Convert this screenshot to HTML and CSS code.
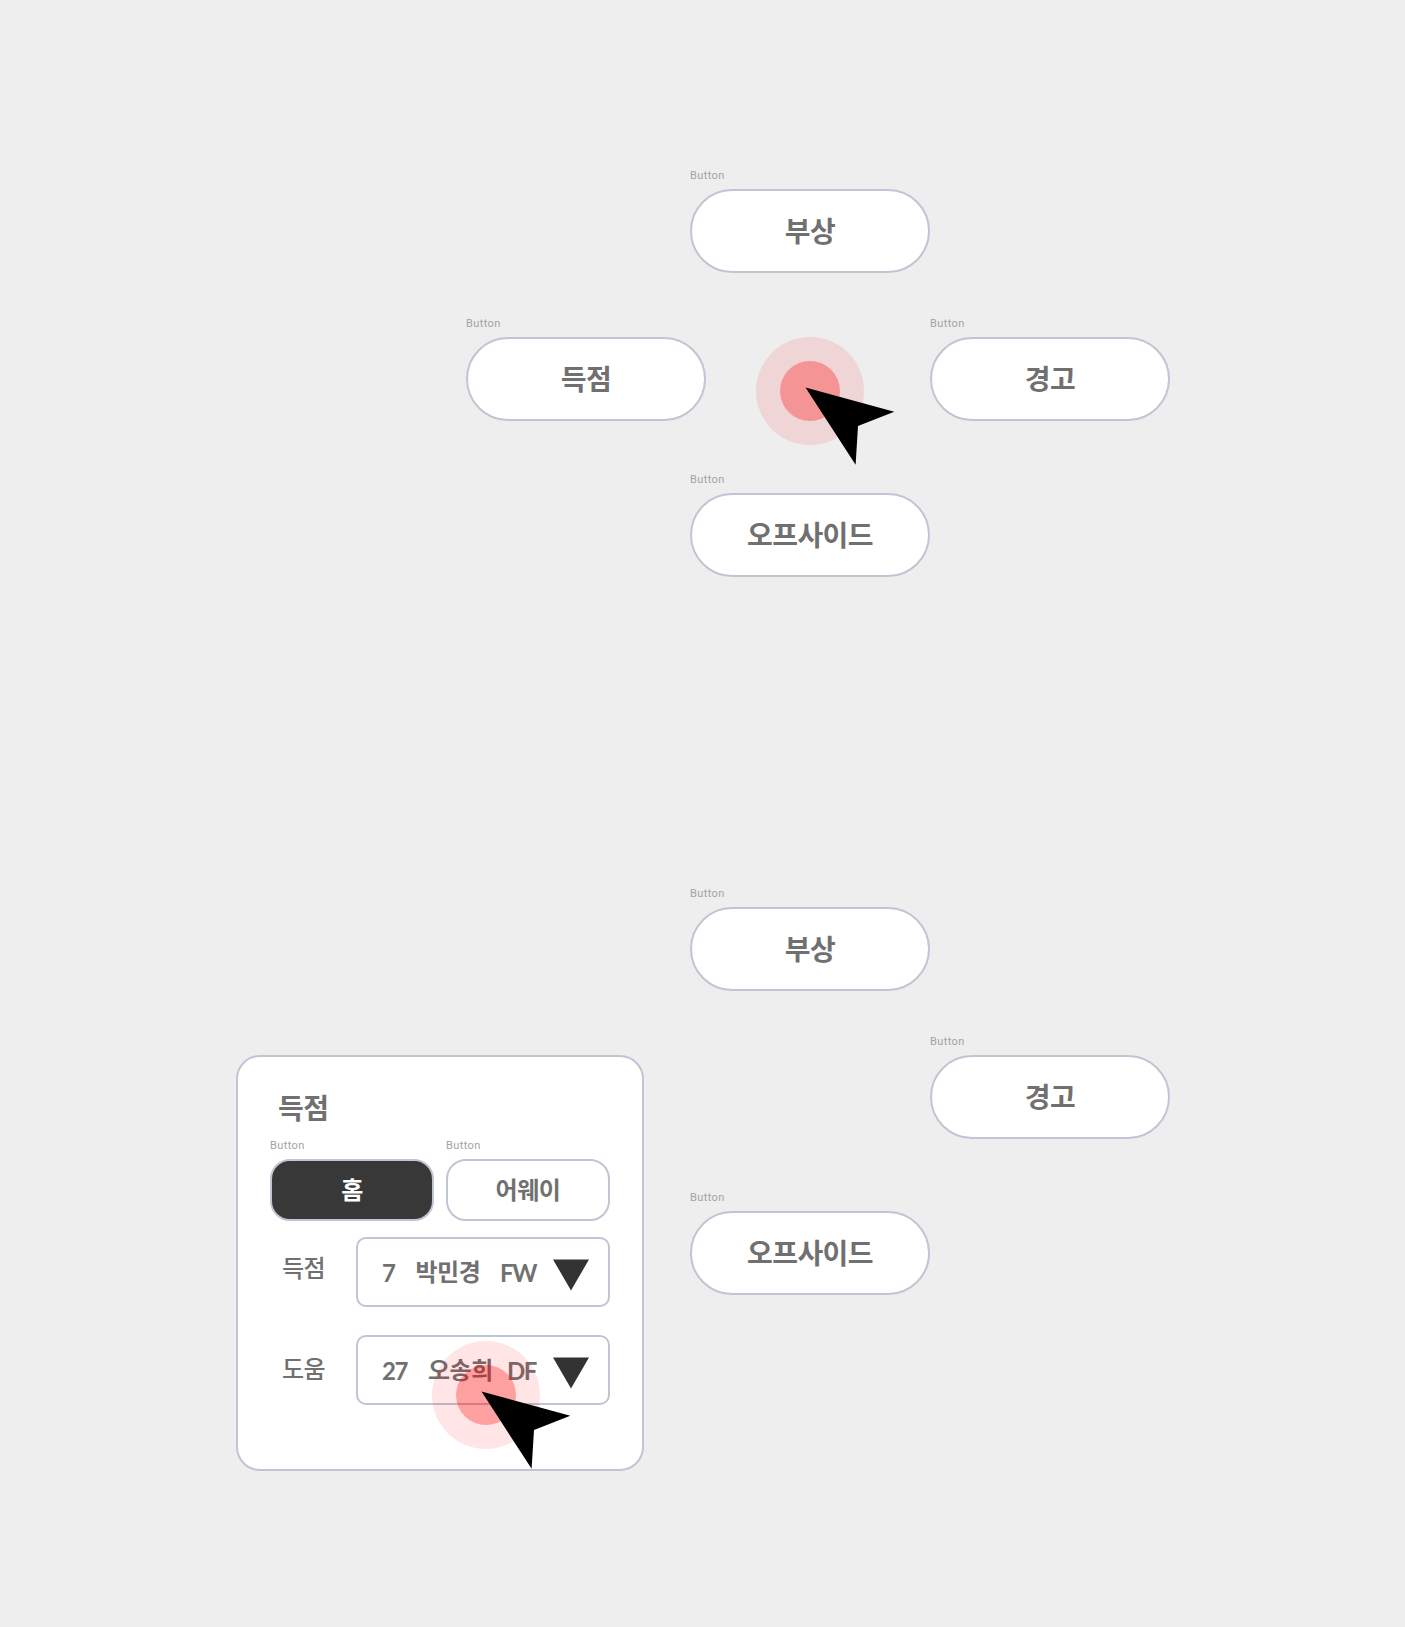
FILE: index.html
```html
<!DOCTYPE html>
<html lang="ko">
<head>
<meta charset="utf-8">
<title>경기 기록 입력</title>
<link rel="stylesheet" href="styles.css">
</head>
<body>
<svg class="defs" width="0" height="0" aria-hidden="true">
  <symbol id="pointer" viewBox="0 0 140 130">
    <circle cx="54" cy="54" r="54" fill="#f00" fill-opacity=".1"/>
    <circle cx="54" cy="54" r="30" fill="#f00" fill-opacity=".3"/>
    <path d="M49.5 50.5 138.3 74.8 102 89 99.6 127.8Z" fill="#000"/>
  </symbol>
</svg>
<main class="page">
  <section class="scene scene-menu">
    <div class="field field-top"><span class="caption">Button</span><button class="pill">부상</button></div>
    <div class="row">
      <div class="field"><span class="caption">Button</span><button class="pill">득점</button></div>
      <div class="field"><span class="caption">Button</span><button class="pill">경고</button></div>
    </div>
    <div class="field field-bottom"><span class="caption">Button</span><button class="pill">오프사이드</button></div>
    <svg class="pointer pointer-menu"><use href="#pointer"/></svg>
  </section>

  <section class="scene scene-form">
    <div class="card">
      <h2 class="title">득점</h2>
      <div class="teams">
        <div class="field"><span class="caption">Button</span><button class="tab tab-active">홈</button></div>
        <div class="field"><span class="caption">Button</span><button class="tab">어웨이</button></div>
      </div>
      <div class="entry">
        <span class="entry-label">득점</span>
        <div class="select">
          <span class="number">7</span><span class="name">박민경</span><span class="position">FW</span>
          <svg class="arrow" viewBox="0 0 36 32"><path d="M0 .4H36L18 31.6Z" fill="#333"/></svg>
        </div>
      </div>
      <div class="entry entry-assist">
        <span class="entry-label">도움</span>
        <div class="select">
          <span class="number">27</span><span class="name">오송희</span><span class="position">DF</span>
          <svg class="arrow" viewBox="0 0 36 32"><path d="M0 .4H36L18 31.6Z" fill="#333"/></svg>
        </div>
      </div>
      <svg class="pointer pointer-form"><use href="#pointer"/></svg>
    </div>
    <div class="options">
      <div class="field"><span class="caption">Button</span><button class="pill">부상</button></div>
      <div class="field field-right"><span class="caption">Button</span><button class="pill">경고</button></div>
      <div class="field field-last"><span class="caption">Button</span><button class="pill">오프사이드</button></div>
    </div>
  </section>
</main>
</body>
</html>
```
FILE: styles.css
```css
* { box-sizing: border-box; }

body {
  margin: 0;
  background: #eee;
  color: #707070;
  font-family: "Noto Sans CJK KR", sans-serif;
}

.defs { position: absolute; }

.page {
  width: 1405px;
  height: 1627px;
  padding-top: 169px;
  overflow: hidden;
}

.scene { position: relative; }

.field {
  display: flex;
  flex-direction: column;
  align-items: flex-start;
  gap: 6px;
}

.caption {
  height: 14px;
  font: 400 11px/14px Roboto, sans-serif;
  letter-spacing: .4px;
  color: #a3a3a3;
}

.pill,
.tab {
  padding: 0 0 2px;
  border: 2px solid #bfc5d3;
  background: #fff;
  color: #707070;
  font-family: inherit;
  font-weight: 700;
  letter-spacing: -.02em;
}

.pill {
  width: 240px;
  height: 84px;
  padding-bottom: 3px;
  border-radius: 42px;
  font-size: 28px;
  line-height: 40px;
}

.field-top, .field-bottom { margin-left: 690px; }
.field-bottom { margin-top: 52px; }

.row {
  display: flex;
  gap: 224px;
  margin: 44px 0 0 466px;
}

.pointer {
  position: absolute;
  width: 140px;
  height: 130px;
}

.pointer-menu { left: 756px; top: 168px; }
.pointer-form { left: 194px; top: 284px; }

.scene-form {
  display: flex;
  gap: 46px;
  align-items: flex-start;
  margin: 310px 0 0 236px;
}

.field-right { margin: 44px 0 0 240px; }
.field-last { margin-top: 52px; }

.card {
  position: relative;
  width: 408px;
  height: 416px;
  margin-top: 168px;
  padding: 30px 32px 0;
  border: 2px solid #bfc5d3;
  border-radius: 24px;
  background: #fff;
}

.title {
  margin: 0 0 12px 8px;
  font-size: 28px;
  font-weight: 700;
  line-height: 40px;
  letter-spacing: -.02em;
}

.teams {
  display: flex;
  gap: 12px;
}

.tab {
  width: 164px;
  height: 62px;
  border-radius: 20px;
  font-size: 24px;
  line-height: 36px;
}

.tab-active {
  background: #383838;
  color: #fff;
}

.entry {
  display: flex;
  justify-content: space-between;
  margin-top: 16px;
}

.entry-assist { margin-top: 28px; }

.entry-label {
  margin: 12px 0 0 12px;
  font-size: 24px;
  font-weight: 500;
  line-height: 36px;
  letter-spacing: -.02em;
}

.entry-assist .entry-label { margin-top: 15px; }

.select {
  display: flex;
  align-items: center;
  width: 254px;
  height: 70px;
  padding: 0 19px 0 24px;
  border: 2px solid #bfc5d3;
  border-radius: 10px;
  font-size: 24px;
  line-height: 36px;
  letter-spacing: -.02em;
}

.name {
  margin: 0 0 2px 21px;
  font-weight: 700;
}

.number,
.position {
  margin-top: 1px;
  font-family: Lato, sans-serif;
  font-weight: 700;
  letter-spacing: -.06em;
}

.position { margin-left: auto; }

.arrow {
  width: 36px;
  height: 32px;
  margin: 5px 0 0 17px;
}
```
